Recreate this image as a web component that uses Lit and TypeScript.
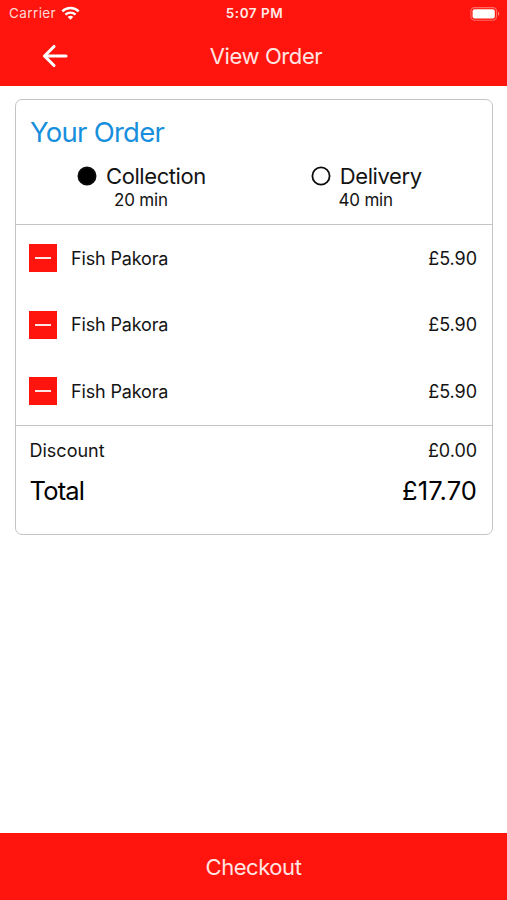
import { LitElement, html, css } from "lit";
import { customElement, property } from "lit/decorators.js";

@customElement("status-bar")
class StatusBar extends LitElement {
  static styles = css`
    :host { display: grid; grid-template-columns: 1fr auto 1fr; align-items: center; height: 27px; padding: 0 7px 0 9px; color: #fff; font-size: 13.5px; line-height: 27px; }
    .carrier { display: flex; align-items: center; gap: 5px; color: #ffd9d6; letter-spacing: 0.4px; }
    .time { font-weight: 600; letter-spacing: 0.5px; color: #ffe9e7; }
    .power { display: flex; justify-content: flex-end; }
    svg { display: block; }
  `;
  render() {
    return html`
      <div class="carrier"><span>Carrier</span>
        <svg width="19" height="15" viewBox="0 0 19 15" fill="none" stroke="#fff" stroke-width="2.3">
          <path d="M1.3 5.3 C5.9 .9 13.1 .9 17.7 5.3" />
          <path d="M4.4 8.6 C7.3 5.9 11.7 5.9 14.6 8.6" />
          <path d="M6.7 10.9 C8.3 9.5 10.7 9.5 12.3 10.9 L9.5 13.8 Z" fill="#fff" stroke="none" />
        </svg>
      </div>
      <div class="time">5:07 PM</div>
      <div class="power">
        <svg width="30" height="14" viewBox="0 0 30 14">
          <rect x=".9" y=".6" width="25.6" height="12.6" rx="3.6" fill="none" stroke="#ff6a63" stroke-width="1.1" />
          <rect x="2.6" y="2.3" width="22.2" height="9.2" rx="2" fill="#fff" />
          <path d="M28 4.8 C29.7 5.5 29.7 8.3 28 9 Z" fill="#ff8781" />
        </svg>
      </div>`;
  }
}

@customElement("order-option")
class OrderOption extends LitElement {
  @property() label = "";
  @property() wait = "";
  @property({ type: Boolean }) selected = false;
  static styles = css`
    :host { display: flex; flex-direction: column; align-items: center; }
    .choice { display: flex; align-items: center; gap: 9px; font-size: 22px; line-height: 28px; letter-spacing: -0.42px; }
    .wait { font-size: 17px; line-height: 20px; letter-spacing: -0.2px; padding-right: 1px; }
    svg { display: block; }
  `;
  render() {
    return html`
      <div class="choice">
        <svg width="20" height="20" viewBox="0 0 20 20">
          <circle cx="10" cy="10" r="8.6" stroke="#0c0c0c" stroke-width="1.8" fill=${this.selected ? "#000" : "none"} />
        </svg>
        <span>${this.label}</span>
      </div>
      <div class="wait">${this.wait}</div>`;
  }
}

@customElement("app-root")
class AppRoot extends LitElement {
  private items = [
    { name: "Fish Pakora", price: "£5.90" },
    { name: "Fish Pakora", price: "£5.90" },
    { name: "Fish Pakora", price: "£5.90" },
  ];
  static styles = css`
    :host { display: flex; flex-direction: column; height: 900px; background: #fff; color: #141414; font-family: Inter, "Liberation Sans", sans-serif; overflow: hidden; }
    * { box-sizing: border-box; }
    header { height: 86px; background: #ff150d; flex: none; }
    .nav { display: grid; grid-template-columns: 1fr auto 1fr; align-items: center; height: 58px; padding: 0 17px 0 42px; }
    .nav svg { display: block; }
    .title { font-size: 22px; line-height: 28px; color: #ffe4e2; letter-spacing: -0.4px; }
    main { flex: 1; padding: 13px 14px 0 15px; }
    .card { height: 436px; border: 1px solid #c4c4c4; border-radius: 7px; display: flex; flex-direction: column; }
    .top { height: 125px; padding-top: 15px; border-bottom: 1px solid #c4c4c4; }
    .heading { padding-left: 14px; font-size: 27.5px; line-height: 34px; color: #188fdc; letter-spacing: -0.75px; }
    .options { display: flex; padding-top: 13px; }
    .collection { margin-left: 61px; }
    .delivery { margin-left: 105px; }
    .items { height: 201px; border-bottom: 1px solid #c4c4c4; }
    .item { display: flex; align-items: center; height: 66.6px; padding: 0 15px 0 13px; font-size: 18px; }
    .minus { width: 28px; height: 28px; background: #ff150d; display: grid; place-items: center; margin-right: 14px; flex: none; }
    .dash { width: 16px; height: 2px; background: #ffe6e4; }
    .name { flex: 1; letter-spacing: -0.15px; }
    .line { display: flex; justify-content: space-between; padding: 0 15px 0 13.5px; font-size: 18px; line-height: 24px; margin-top: 13px; }
    .total { font-size: 25.5px; line-height: 32px; color: #000; margin-top: 12px; }
    .sum { letter-spacing: -0.8px; }
    .price { letter-spacing: -0.05px; }
    .total .price { letter-spacing: 0.1px; }
    footer { height: 67px; flex: none; background: #ff150d; color: #ffe4e2; display: grid; place-items: center; font-size: 22px; line-height: 28px; letter-spacing: -0.45px; }
  `;
  render() {
    return html`
      <header>
        <status-bar></status-bar>
        <div class="nav">
          <svg width="27" height="24" viewBox="0 0 27 24" fill="none" stroke="#fff" stroke-width="3.1" stroke-linecap="round" stroke-linejoin="round">
            <path d="M12 2.5 L2.5 12 L12 21.5 M2.5 12 H24" />
          </svg>
          <div class="title">View Order</div>
        </div>
      </header>
      <main>
        <section class="card">
          <div class="top">
            <div class="heading">Your Order</div>
            <div class="options">
              <order-option class="collection" label="Collection" wait="20 min" selected></order-option>
              <order-option class="delivery" label="Delivery" wait="40 min"></order-option>
            </div>
          </div>
          <div class="items">
            ${this.items.map((i) => html`
              <div class="item">
                <div class="minus"><div class="dash"></div></div>
                <span class="name">${i.name}</span>
                <span class="price">${i.price}</span>
              </div>`)}
          </div>
          <div class="line"><span>Discount</span><span class="price">£0.00</span></div>
          <div class="line total"><span class="sum">Total</span><span class="price">£17.70</span></div>
        </section>
      </main>
      <footer>Checkout</footer>`;
  }
}
